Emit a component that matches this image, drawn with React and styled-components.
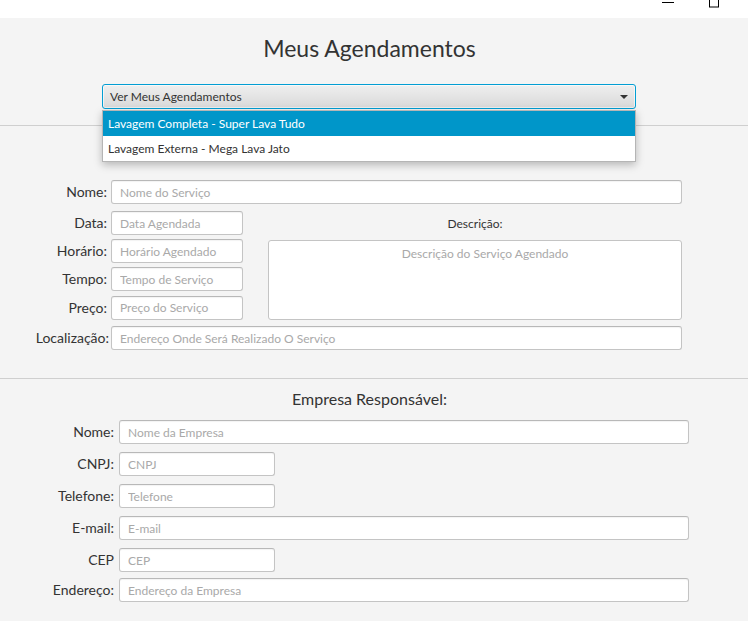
import React from "react";
import styled, { createGlobalStyle } from "styled-components";

const GlobalStyle = createGlobalStyle`
  html, body {
    margin: 0;
    padding: 0;
    background: #f4f4f4;
  }
  body {
    font-family: "Lato", "Open Sans", sans-serif;
    color: #333;
  }
  * {
    box-sizing: border-box;
  }
`;

const Window = styled.div`
  width: 748px;
  height: 621px;
  background: #f4f4f4;
  overflow: hidden;
`;

const TitleBar = styled.div`
  height: 18px;
  background: #fff;
  display: flex;
  justify-content: flex-end;
  align-items: flex-start;
  padding-right: 11px;
`;

const WinButton = styled.div`
  width: 46px;
  height: 18px;
  display: flex;
  justify-content: center;
  align-items: flex-start;
`;

const Title = styled.h1`
  margin: 0;
  padding: 15px 9px 0 0;
  font-size: 23px;
  line-height: 30px;
  font-weight: 400;
  text-align: center;
  color: #333;
`;

const ComboWrap = styled.div`
  position: relative;
  margin: 21px 112px 0 102px;
`;

const Combo = styled.div`
  height: 25px;
  border: 1px solid #039ed3;
  border-radius: 3px;
  background: linear-gradient(#efefef, #d9d9d9);
  box-shadow: inset 0 0 0 1px rgba(255, 255, 255, 0.6);
  display: flex;
  align-items: center;
  justify-content: space-between;
  padding: 0 7px;
  font-size: 12px;
  color: #333;
`;

const Arrow = styled.span`
  width: 0;
  height: 0;
  border-left: 4px solid transparent;
  border-right: 4px solid transparent;
  border-top: 4px solid #333;
`;

const Popup = styled.ul`
  position: absolute;
  top: 26px;
  left: 0;
  right: 0;
  margin: 0;
  padding: 0;
  list-style: none;
  background: #fff;
  border: 1px solid #b5b5b5;
  box-shadow: 0 3px 8px rgba(0, 0, 0, 0.25);
  z-index: 2;
`;

const PopupItem = styled.li`
  height: 25px;
  line-height: 25px;
  padding-left: 5px;
  font-size: 12px;
  background: ${(p) => (p.$selected ? "#0096c9" : "#fff")};
  color: ${(p) => (p.$selected ? "#fff" : "#333")};
`;

const Separator = styled.hr`
  margin: ${(p) => p.$top || 0}px 0 0 0;
  border: none;
  border-top: 1px solid #cfcfcf;
  height: 1px;
  background: #fbfbfb;
`;

const ServiceGrid = styled.div`
  display: grid;
  grid-template-columns: 111px 132px 25px 414px;
  row-gap: 4px;
  padding-top: 54px;
  padding-bottom: 28px;
`;

const CompanyGrid = styled.div`
  display: grid;
  grid-template-columns: 119px 156px 414px;
  row-gap: 8px;
`;

const Label = styled.label`
  grid-column: 1;
  height: 24px;
  line-height: 24px;
  text-align: right;
  padding-right: ${(p) => p.$pr || 4}px;
  font-size: 14px;
  color: #333;
  white-space: nowrap;
  margin-bottom: ${(p) => p.$mb || 0}px;
  margin-top: ${(p) => p.$mt || 0}px;
`;

const Input = styled.input`
  grid-column: ${(p) => p.$span || "auto"};
  height: 24px;
  border: 1px solid #c4c4c4;
  border-top-color: #b8b8b8;
  border-radius: 3px;
  background: #fff;
  box-shadow: inset 0 1px 1px rgba(0, 0, 0, 0.05);
  padding: 0 8px;
  font-family: inherit;
  font-size: 12px;
  color: #333;
  outline: none;
  margin-bottom: ${(p) => p.$mb || 0}px;
  margin-top: ${(p) => p.$mt || 0}px;
  &::placeholder {
    color: #a9a9a9;
  }
`;

const DescLabel = styled.div`
  grid-column: 4;
  grid-row: 2;
  height: 24px;
  padding-top: 1px;
  line-height: 24px;
  text-align: center;
  font-size: 12px;
  color: #333;
`;

const TextArea = styled.textarea`
  grid-column: 4;
  grid-row: 3 / span 3;
  height: 80px;
  margin-top: 1px;
  resize: none;
  border: 1px solid #c4c4c4;
  border-radius: 3px;
  background: #fff;
  padding: 5px 8px 5px 28px;
  font-family: inherit;
  font-size: 12px;
  text-align: center;
  outline: none;
  &::placeholder {
    color: #a9a9a9;
  }
`;

const SectionTitle = styled.h2`
  margin: 7px 9px 8px 0;
  font-size: 16px;
  line-height: 26px;
  font-weight: 400;
  text-align: center;
  color: #333;
`;

const companyFields = [
  { label: "Nome:", placeholder: "Nome da Empresa", wide: true },
  { label: "CNPJ:", placeholder: "CNPJ" },
  { label: "Telefone:", placeholder: "Telefone" },
  { label: "E-mail:", placeholder: "E-mail", wide: true },
  { label: "CEP", placeholder: "CEP" },
  { label: "Endereço:", placeholder: "Endereço da Empresa", wide: true, mt: -2 },
];

export default function App() {
  return (
    <Window>
      <GlobalStyle />
      <TitleBar>
        <WinButton>
          <svg width="12" height="6" viewBox="0 0 12 6">
            <line x1="0" y1="2.5" x2="12" y2="2.5" stroke="#000" strokeWidth="1" />
          </svg>
        </WinButton>
        <WinButton>
          <svg width="11" height="8" viewBox="0 0 11 8">
            <rect x="0.5" y="-3" width="9" height="10" fill="none" stroke="#000" strokeWidth="1" />
          </svg>
        </WinButton>
      </TitleBar>

      <Title>Meus Agendamentos</Title>

      <ComboWrap>
        <Combo>
          <span>Ver Meus Agendamentos</span>
          <Arrow />
        </Combo>
        <Popup>
          <PopupItem $selected>Lavagem Completa - Super Lava Tudo</PopupItem>
          <PopupItem>Lavagem Externa - Mega Lava Jato</PopupItem>
        </Popup>
      </ComboWrap>

      <Separator $top={16} />

      <ServiceGrid>
        <Label $mb={3}>Nome:</Label>
        <Input $span="2 / span 3" $mb={3} placeholder="Nome do Serviço" />

        <Label>Data:</Label>
        <Input placeholder="Data Agendada" />
        <DescLabel>Descrição:</DescLabel>

        <Label>Horário:</Label>
        <Input placeholder="Horário Agendado" />
        <TextArea placeholder="Descrição do Serviço Agendado" />

        <Label>Tempo:</Label>
        <Input placeholder="Tempo de Serviço" />

        <Label>Preço:</Label>
        <Input placeholder="Preço do Serviço" />

        <Label $mt={2} $pr={2}>Localização:</Label>
        <Input $span="2 / span 3" $mt={2} placeholder="Endereço Onde Será Realizado O Serviço" />
      </ServiceGrid>

      <Separator />

      <SectionTitle>Empresa Responsável:</SectionTitle>

      <CompanyGrid>
        {companyFields.map((f) => (
          <React.Fragment key={f.label}>
            <Label $pr={5} $mt={f.mt}>{f.label}</Label>
            <Input
              $span={f.wide ? "2 / span 2" : "2"}
              $mt={f.mt}
              placeholder={f.placeholder}
            />
          </React.Fragment>
        ))}
      </CompanyGrid>
    </Window>
  );
}
